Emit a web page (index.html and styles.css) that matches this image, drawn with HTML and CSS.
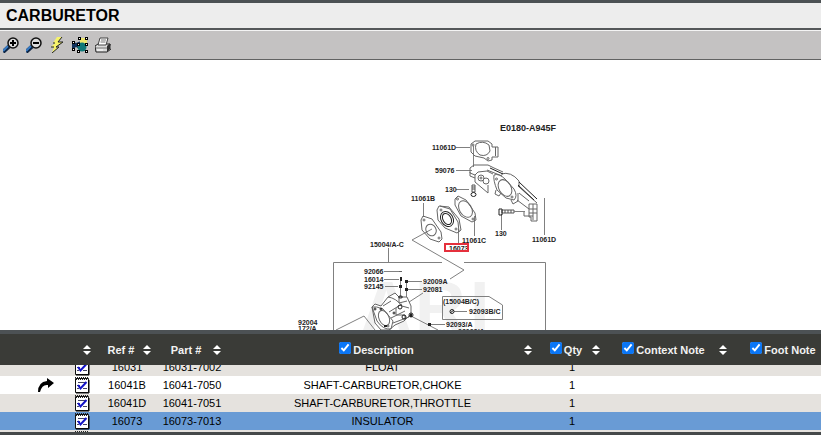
FILE: index.html
```html
<!DOCTYPE html>
<html lang="en">
<head>
<meta charset="utf-8">
<title>Carburetor parts</title>
<link rel="stylesheet" href="styles.css">
</head>
<body>
<svg class="defs" aria-hidden="true">
  <symbol id="sort" viewBox="0 0 8 10"><path d="M0 4 4 0 8 4ZM0 6H8L4 10Z" fill="#fff"/></symbol>
  <symbol id="note" viewBox="0 0 16 18">
    <path d="M1.500 2.500H14.500V16.500H1.500Z" fill="#fff" stroke="#111"/>
    <path d="M15 4V17H2" fill="none" stroke="#000"/>
    <path d="M1 1.500H14M2 3.500H15" stroke="#222" stroke-dasharray="1 1"/>
    <path d="M4 6.500H11M3 9.500H6M3 12.500H5M9 12.500H13" stroke="#446" />
    <path d="M4 9 6.500 12.500 12.500 6" fill="none" stroke="#1212c8" stroke-width="2"/>
  </symbol>
</svg>

<header class="title"><h1>CARBURETOR</h1></header>

<nav class="toolbar" aria-label="Diagram tools">
  <button type="button" aria-label="Zoom in"><svg viewBox="0 0 16 16">
    <path d="M0 15 6 9.500" stroke="#0c2444" stroke-width="4"/><path d="M0 14 5 9" stroke="#3a7cc4" stroke-width="2"/>
    <circle cx="10" cy="6" r="5" fill="#dcdcdc" stroke="#111" stroke-width="1.500"/><path d="M7 6H13M10 3V9" stroke="#000" stroke-width="2"/></svg></button>
  <button type="button" aria-label="Zoom out"><svg viewBox="0 0 16 16">
    <path d="M0 15 6 9.500" stroke="#0c2444" stroke-width="4"/><path d="M0 14 5 9" stroke="#3a7cc4" stroke-width="2"/>
    <circle cx="10" cy="6" r="5" fill="#dcdcdc" stroke="#111" stroke-width="1.500"/><path d="M7 6H13" stroke="#000" stroke-width="2"/></svg></button>
  <button type="button" aria-label="Quick view"><svg viewBox="0 0 16 16">
    <path d="M8 0H13L9 5H14L7 10H10L3 16 5 10H2L6 6H4Z" fill="#f6f36a"/><path d="M13 0 9 5H14L7 10H10L3 16M2 10H5M4 6H6" fill="none" stroke="#222"/></svg></button>
  <button type="button" aria-label="Hotspots"><svg viewBox="0 0 16 16">
    <path d="M0 4 4 6 9 4V13L4 10 0 13Z" fill="#10305c"/><path d="M8 1H15V8H8Z" fill="#eee870"/><circle cx="10" cy="10" r="4.500" fill="#107878"/>
    <g fill="#000"><path d="M6 0h3v3h-3zM13 0h3v3h-3zM0 4h3v3h-3zM13 6h3v3h-3zM0 11h3v3h-3zM5 13h3v3h-3zM13 13h3v3h-3zM5 6h3v3h-3z"/></g>
    <g fill="#fff"><path d="M7 1h1v1h-1zM14 1h1v1h-1zM1 5h1v1h-1zM14 7h1v1h-1zM1 12h1v1h-1zM6 14h1v1h-1zM14 14h1v1h-1zM6 7h1v1h-1z"/></g></svg></button>
  <button type="button" aria-label="Print"><svg viewBox="0 0 16 16">
    <path d="M0 9 3 7H14L16 8V12L12 15H1Z" fill="#dcdcdc" stroke="#222"/><path d="M5 1H13L11 8H3Z" fill="#fff" stroke="#444"/>
    <path d="M6 3H11M5.500 5H10.500M1 11H12" stroke="#777"/><path d="M12 15V9L15 6V12Z" fill="#333"/><path d="M2 13H8" stroke="#fff"/></svg></button>
</nav>

<main class="diagram">
<svg class="drawing" viewBox="250 60 321 270" role="img" aria-label="Exploded view of the carburetor">
  <g class="watermark"><text x="361" y="331">A</text><text x="415" y="331">R</text><text x="470" y="331">I</text></g>
  <text class="model" x="500" y="131">E0180-A945F</text>

  <!-- leader lines and frames -->
  <g class="leader">
    <path d="M456 147.500H470M473.500 146V167M456 170.500H472M456 189.500H469M423.500 203V217M474.500 216V236M458.500 229V245M501.500 214V230M544.500 198V235"/>
    <path d="M388.500 248V262M333.500 330V262.500H442M464 262.500H545.500V330M432 229 412 240 464 270 450 279M384 271.500H399M384 279.500H399M385 286.500H398M400.500 278V298M406.500 280V304M408 281.500H422M408 289.500H422M423 293 406 304M336 330 364 316 375 330M411 316 438 330M454 311.500H467M431 324.500H445"/>
    <path d="M442.500 296.500H489L502.500 305V319.500H442.500Z"/>
  </g>

  <!-- upper gasket -->
  <g class="part">
    <path d="M471 144 475 141H488L492 144V147H498V157H492V160L488 161 484 158 475 156 471 152Z"/>
    <path d="M476 144Q483 140 489 145L490 151Q487 157 480 155 474 151 476 144Z"/>
    <circle cx="488" cy="158.500" r="1"/><circle cx="473" cy="145" r="1"/><path d="M495.500 147V156"/>
  </g>

  <!-- intake manifold -->
  <g class="part">
    <path d="M470 168 474 165H488L494 168 503 172M470 168V173L475 175 478 172 487 171 493 174M475 175V182L488 193V185M470 172V176L475 178"/>
    <circle cx="481" cy="178" r="3"/><circle cx="486" cy="181" r="3"/><circle cx="481" cy="178" r="1"/>
    <path d="M494 175Q499 173 505 179L514 189Q518 196 514 200L506 198 497 190Q493 180 494 175Z"/>
    <ellipse cx="505" cy="188" rx="6" ry="9" transform="rotate(-30 505 188)"/>
    <circle cx="496.500" cy="179" r="1"/><circle cx="512" cy="197" r="1"/>
    <path d="M501 174Q511 171 519 181V187M496 190 495 194 499 196 501 193M511 200 513 204 518 201V193M517 200 529 209M519 193 529 201"/>
    <path d="M487 170 502 176M518 186 537 203M529 204H537V221H531V217H529V204M529 209H537M524 211V216H533M533 204V220M529 213H537"/>
  </g>
  <path class="heavy" d="M490 168 503 174M519 182 537 199M518 185 534 200"/>
  <path class="bolt" d="M472 185H475V192H472ZM472 187H475M472 189H475"/>
  <ellipse class="heavy" cx="473.500" cy="194.500" rx="2.500" ry="2"/>
  <path class="bolt" d="M502 210H514V213H502ZM505 210V213M508 210V213M511 210V213"/>
  <path class="heavy" d="M499 209H502V215H499Z"/>
  <path class="leader" d="M514 211.500H525"/>

  <!-- flange gaskets and insulator -->
  <g class="part">
    <path d="M455 199 458 196 466 200 475 213 476 220 472 222 461 216 455 205Z"/>
    <ellipse cx="465.500" cy="209" rx="6" ry="9" transform="rotate(-32 465.500 209)"/><circle cx="457.500" cy="199" r="1"/><circle cx="473" cy="219" r="1"/>
    <path d="M437 210 439 206 449 207 459 219 461 230 457 233 445 228 438 220ZM440 206 450 209 458 222 459 232"/>
    <circle cx="441" cy="210" r="1"/><circle cx="456" cy="229" r="1"/>
    <path d="M421 220 423 216 432 219 441 232 442 239 439 242 430 239 422 230Z"/>
    <ellipse cx="431" cy="230" rx="5" ry="6" transform="rotate(-30 431 230)"/><circle cx="424" cy="220" r="1"/><circle cx="439" cy="238" r="1"/>
  </g>
  <g class="heavy"><ellipse cx="447" cy="219" rx="6" ry="8" transform="rotate(-30 447 219)"/><ellipse cx="447" cy="219" rx="4" ry="6" transform="rotate(-30 447 219)"/></g>

  <!-- carburetor body -->
  <g class="part">
    <path d="M372 307 375 304 381 306 388 297 395 293 399 297H407L411 306V314L404 321 395 325 389 330H381L375 323Z" fill="#fff"/>
    <path d="M372 307Q376 306 383 309L393 321 391 329Q383 330 377 321ZM388 297Q396 298 402 306L409 308M383 306 391 301M389 312 402 304M391 318 405 311M393 323 409 317M399 297V303L407 301M396 308V315H405V320"/>
    <ellipse cx="384" cy="318" rx="5" ry="8" transform="rotate(-25 384 318)"/>
    <circle cx="388" cy="326" r="1"/><path d="M399 271.500H402"/>
  </g>
  <g class="heavy">
    <circle cx="400" cy="307" r="2"/><circle cx="394" cy="313" r="1"/><circle cx="404" cy="317" r="2"/><circle cx="375" cy="309" r="1"/><circle cx="381" cy="309" r="1"/>
    <circle cx="411" cy="315" r="2"/><circle cx="452" cy="311.500" r="2"/><path d="M450 313 454 310"/><ellipse cx="400.500" cy="297" rx="2" ry="1"/>
  </g>
  <path class="solid" d="M400 277h2v4h-2zM399 285h3v3h-3zM405 280h3v3h-3zM405 288h3v3h-3zM428 323h3v3h-3zM410 314h2v3h-2zM384 325h3v2h-3z"/>

  <g class="labels">
    <text x="432" y="150">11061D</text><text x="435" y="173">59076</text><text x="445" y="192">130</text>
    <text x="411" y="201">11061B</text><text x="462" y="243">11061C</text><text x="495" y="236">130</text>
    <text x="532" y="242">11061D</text><text x="449" y="251">16073</text><text x="370" y="247">15004/A-C</text>
    <text x="364" y="274">92066</text><text x="364" y="282">16014</text><text x="364" y="289">92145</text>
    <text x="423" y="284">92009A</text><text x="423" y="292">92081</text><text x="443" y="304">(15004B/C)</text>
    <text x="469" y="314">92093B/C</text><text x="446" y="327">92093/A</text>
    <text x="298" y="325">92004</text><text x="298" y="331">172/A</text>
    <text x="458" y="334">92093/A</text>
  </g>
  <rect class="selected-mark" x="445" y="244" width="23" height="7"/>
</svg>
</main>

<section class="parts" aria-label="Parts list">
<div class="scroller" id="scroller">
<table>
  <colgroup><col class="c-arrow"><col class="c-note"><col class="c-ref"><col class="c-part"><col><col class="c-qty"><col class="c-context"><col class="c-foot"></colgroup>
  <thead><tr>
    <th></th>
    <th><svg class="sort"><use href="#sort"/></svg></th>
    <th>Ref #<svg class="sort"><use href="#sort"/></svg></th>
    <th>Part #<svg class="sort"><use href="#sort"/></svg></th>
    <th><label><input type="checkbox" checked>Description</label><svg class="sort"><use href="#sort"/></svg></th>
    <th><label><input type="checkbox" checked>Qty</label><svg class="sort"><use href="#sort"/></svg></th>
    <th><label><input type="checkbox" checked>Context Note</label><svg class="sort"><use href="#sort"/></svg></th>
    <th><label><input type="checkbox" checked>Foot Note</label></th>
  </tr></thead>
  <tbody>
    <tr><td></td><td><svg class="note"><use href="#note"/></svg></td><td>16031</td><td>16031-7002</td><td>FLOAT</td><td>1</td><td></td><td></td></tr>
    <tr><td class="arrow-cell"><svg class="arrow" viewBox="0 0 16 14"><path d="M0 14Q0 4 9 3V0L16 5 10 10V7Q4 6 2 14Z"/></svg></td><td><svg class="note"><use href="#note"/></svg></td><td>16041B</td><td>16041-7050</td><td>SHAFT-CARBURETOR,CHOKE</td><td>1</td><td></td><td></td></tr>
    <tr><td></td><td><svg class="note"><use href="#note"/></svg></td><td>16041D</td><td>16041-7051</td><td>SHAFT-CARBURETOR,THROTTLE</td><td>1</td><td></td><td></td></tr>
    <tr class="selected"><td></td><td><svg class="note"><use href="#note"/></svg></td><td>16073</td><td>16073-7013</td><td>INSULATOR</td><td>1</td><td></td><td></td></tr>
    <tr><td></td><td><svg class="note"><use href="#note"/></svg></td><td></td><td></td><td></td><td></td><td></td><td></td></tr>
  </tbody>
</table>
</div>
</section>
<script src="script.js"></script>
</body>
</html>
```
FILE: styles.css
```css
* { box-sizing: border-box; }

body {
  margin: 0;
  height: 100vh;
  display: flex;
  flex-direction: column;
  overflow: hidden;
  background: #fff;
  color: #000;
  font-family: "Liberation Sans", Arial, sans-serif;
  font-size: 11px;
}

.defs { position: absolute; width: 0; height: 0; }

.title {
  border-top: 3px solid #4c5154;
  border-bottom: 2px solid #55585a;
  background: #ededed;
  padding: 0 6px;
}

h1 { margin: 0; font-size: 16px; line-height: 25px; }

.toolbar {
  display: flex;
  gap: 7px;
  padding: 6px 3px;
  background: #c4c2c2;
  border-top: 1px solid #f4f4f4;
  border-bottom: 1px solid #626262;
}

.toolbar button {
  width: 16px;
  height: 16px;
  padding: 0;
  border: 0;
  background: none;
}

.toolbar svg { display: block; width: 16px; height: 16px; }

.diagram {
  flex: 1;
  min-height: 0;
  display: flex;
  justify-content: center;
  overflow: hidden;
}

.drawing { flex: none; width: 321px; height: 270px; }
.leader { fill: none; stroke: #808080; }
.part { fill: none; stroke: #666; }
.bolt { fill: none; stroke: #555; }
.heavy { fill: none; stroke: #222; }
.solid { fill: #222; }
.labels { font-size: 7px; font-weight: bold; fill: #222; }
.model { font-size: 9px; font-weight: bold; fill: #222; }
.watermark { font-size: 70px; font-weight: bold; fill: #f1f1f1; }
.selected-mark { fill: none; stroke: #e5303c; stroke-width: 2; }

.parts {
  flex: none;
  background: #3a3b37;
  border-top: 4px solid #4c5154;
  border-bottom: 3px solid #45494a;
}

.scroller { height: 98px; overflow: hidden; }

table {
  width: 100%;
  min-width: 845px;
  table-layout: fixed;
  border-collapse: separate;
  border-spacing: 0;
  text-align: center;
}

.c-arrow { width: 72px; }
.c-note { width: 25px; }
.c-ref { width: 60px; }
.c-part { width: 70px; }
.c-qty { width: 68px; }
.c-context { width: 127px; }
.c-foot { width: 112px; }

th {
  position: sticky;
  top: 0;
  z-index: 1;
  height: 31px;
  padding: 0 12px 0 0;
  background: #3a3b37;
  color: #f2f2f2;
  white-space: nowrap;
}

th label { display: flex; align-items: center; justify-content: center; gap: 2px; }
th input { width: 12px; height: 12px; margin: 0 0 4px; accent-color: #0b76f5; }
.sort { position: absolute; right: 6px; top: 11px; width: 8px; height: 10px; }

td { height: 18px; padding: 0; background: #e5e2de; line-height: 18px; white-space: nowrap; }
tr:nth-child(even) td { background: #fff; }
tr.selected td { background: #699bd5; }
.note { display: block; width: 16px; height: 18px; margin-left: 2px; }
.arrow { display: block; width: 16px; height: 14px; }
.arrow-cell { padding-left: 38px; }
```
FILE: script.js
```js
// Bring the selected part to the bottom of the list.
document.getElementById("scroller").scrollTop = 7;
```
